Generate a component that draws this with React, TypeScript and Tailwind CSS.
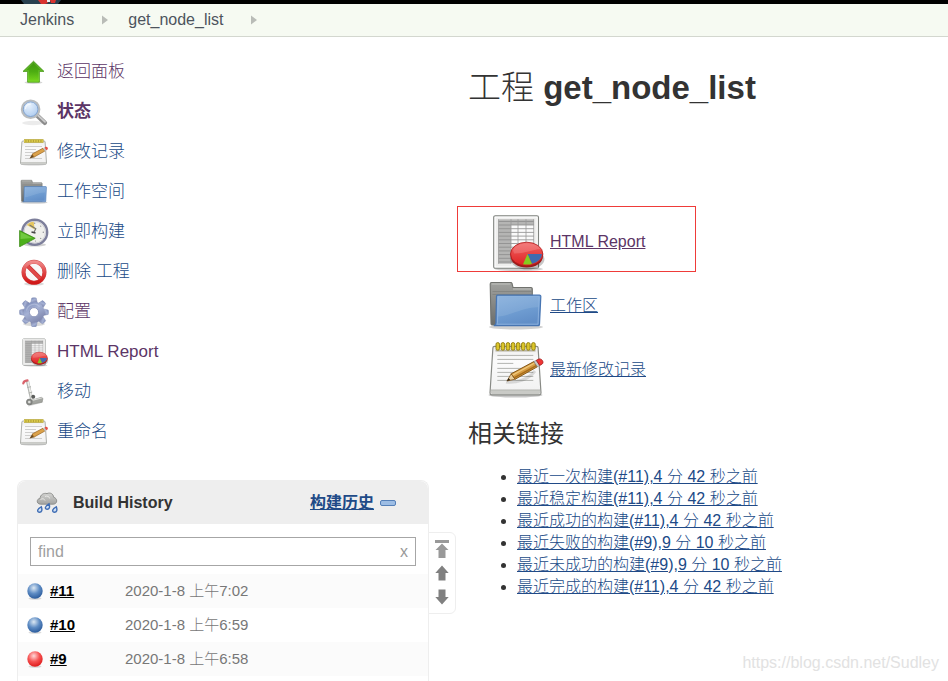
import type { ReactNode } from "react";

type IconProps = { className?: string };

const small = "h-[30px] w-[30px] shrink-0";
const large = "h-[60px] w-[60px] shrink-0";

function UpArrowIcon() {
  return (
    <svg viewBox="0 0 30 30" className={small} aria-hidden="true">
      <defs>
        <linearGradient id="up" x1="0" y1="0" x2="0" y2="1">
          <stop offset="0" stopColor="#3f9410" />
          <stop offset="0.5" stopColor="#4dad12" />
          <stop offset="1" stopColor="#79d91c" />
        </linearGradient>
      </defs>
      <ellipse cx="14.5" cy="25.5" rx="9" ry="1.5" fill="#000" opacity="0.16" />
      <path d="M14.5 4.2 25 14.4h-4.6v10.8H8.6V14.4H4Z" fill="url(#up)" stroke="#4b9a1c" strokeWidth="0.8" strokeLinejoin="round" />
      <path d="M14.5 5.8 22.6 13.6h-3V24H9.5V13.6H6.3Z" fill="none" stroke="#8fdc55" strokeWidth="0.6" opacity="0.5" />
    </svg>
  );
}

function SearchIcon() {
  return (
    <svg viewBox="0 0 30 30" className={small} aria-hidden="true">
      <defs>
        <radialGradient id="lens" cx="0.4" cy="0.3" r="0.8">
          <stop offset="0" stopColor="#e8f2fd" />
          <stop offset="1" stopColor="#a3c4ec" />
        </radialGradient>
      </defs>
      <ellipse cx="14" cy="26" rx="11" ry="2.2" fill="#000" opacity="0.08" />
      <path d="m18.5 18.8 7.4 7" stroke="#8c8c8c" strokeWidth="4.4" strokeLinecap="round" />
      <path d="m19.3 18.6 6.7 6.3" stroke="#cdcdcd" strokeWidth="1.8" strokeLinecap="round" />
      <circle cx="11.6" cy="12.2" r="8.7" fill="url(#lens)" stroke="#b9bcbe" strokeWidth="2.2" />
      <circle cx="11.6" cy="12.2" r="7.3" fill="none" stroke="#7d9ecb" strokeWidth="0.9" />
      <path d="M6.4 12.2c.2-3 2.4-5 5.4-5" fill="none" stroke="#fff" strokeWidth="1.3" opacity="0.7" />
    </svg>
  );
}

function PadDefs() {
  return (
    <defs>
      <linearGradient id="pad" x1="0" y1="0" x2="0" y2="1">
        <stop offset="0" stopColor="#ededed" />
        <stop offset="0.3" stopColor="#fbfbfb" />
        <stop offset="1" stopColor="#f1f1f1" />
      </linearGradient>
    </defs>
  );
}

function NotepadIcon({ className = large }: IconProps) {
  return (
    <svg viewBox="0 0 60 60" className={className} aria-hidden="true">
      <PadDefs />
      <ellipse cx="29.5" cy="55" rx="27" ry="2.6" fill="#000" opacity="0.22" />
      <path d="M8.5 6.3h42q1.5 0 1.6 1.5L55 53q0 1.8-1.8 1.8H5.8Q4 54.8 4 53L6.9 7.8q.1-1.5 1.6-1.5Z" fill="url(#pad)" stroke="#888a85" strokeWidth="1.2" />
      <path d="M5 50.3h49v2.5q0 1.2-1.2 1.2H6.2Q5 54 5 52.8Z" fill="#c9cac6" />
      <path d="M5 50h49" stroke="#a3a5a0" strokeWidth="0.8" />
      <path d="M11.3 15.4h36M11.3 19.4h36M11.3 23.4h16M11.3 28.4h36M11.3 32.4h36M11.3 36.4h36M11.3 40.4h36" stroke="#b2b3b0" strokeWidth="1" />
      <path d="M9.5 9.8h40v1.8h-40z" fill="#77724f" opacity="0.5" />
      {[10, 15.1, 20.2, 25.3, 30.4, 35.5, 40.6, 45.7].map((x) => (
        <rect key={x} x={x} y="2.6" width="3.5" height="7.6" rx="1.6" fill="#dcc62a" stroke="#8d7a0c" strokeWidth="0.9" />
      ))}
      <path d="M20 42c10 1 22-2 29-11" fill="none" stroke="#000" strokeWidth="3" opacity="0.12" />
      <path d="m21 41 4.200-7.200 4 5.400Z" fill="#e9cfa0" stroke="#7c4f16" strokeWidth="0.8" strokeLinejoin="round" />
      <path d="m21 41 1.600-3 1.600 2.100Z" fill="#2b2013" />
      <path d="M25.2 33.8 47.8 21.6l3.5 5.200-22.100 12.400Z" fill="#d59b42" stroke="#7b4d0e" strokeWidth="0.9" />
      <path d="M26.6 35.2 48.7 23" stroke="#f0c77a" strokeWidth="1.4" />
      <path d="m28.1 37.9 22.200-12.300" stroke="#a76c1b" strokeWidth="1.5" />
      <path d="m47.8 21.600 2.500-1.300 3.400 5.100-2.400 1.400Z" fill="#c9cbc7" stroke="#77787a" strokeWidth="0.6" />
      <path d="m50.3 20.3 2.500-1.300c3-.8 5.600 3.300 3.300 5.100l-2.400 1.300Z" fill="#ef3535" stroke="#a31515" strokeWidth="0.8" />
    </svg>
  );
}

function SmallNotepadIcon() {
  return (
    <svg viewBox="0 0 30 30" className={small} aria-hidden="true">
      <PadDefs />
      <ellipse cx="14.5" cy="27.3" rx="13" ry="1.300" fill="#000" opacity="0.18" />
      <path d="M4 4h21q1 0 1.100 1l1.400 21q0 1-1 1H2.500q-1 0-1-1L2.900 5Q3 4 4 4Z" fill="url(#pad)" stroke="#a5a7a3" strokeWidth="0.9" />
      <path d="M2 25h25v1.500H2Z" fill="#c9cac6" />
      <path d="M6 9.500h17M6 12.500h11M6 15.500h14M6 18.500h9M6 21.500h17" stroke="#c9cac8" strokeWidth="0.9" />
      <path d="M5 2.200h19.500v3.600H5Z" fill="#b5a436" />
      <path d="M5 4h19.500" stroke="#dccb4c" strokeWidth="2.600" strokeDasharray="1.400 1.100" />
      <path d="m10.500 21.500 2.700-4.600 2.200 3.300Z" fill="#6d4c22" />
      <path d="M13.200 17 24 11.200l1.800 2.900-11 6.100Z" fill="#dca24a" stroke="#96621c" strokeWidth="0.700" />
      <path d="m24 11.200 1.800-.9 1.800 2.900-1.800.9Z" fill="#c5c6c4" />
      <path d="m25.600 10.300 1.200-.6c1.600-.3 2.800 1.700 1.700 2.700l-1.300.8Z" fill="#e65048" />
    </svg>
  );
}

function FolderIcon({ className = small }: IconProps) {
  return (
    <svg viewBox="0 0 60 60" className={className} aria-hidden="true">
      <defs>
        <linearGradient id="folderBack" x1="0" y1="0" x2="0" y2="1">
          <stop offset="0" stopColor="#a1a29f" />
          <stop offset="1" stopColor="#6b6d6a" />
        </linearGradient>
        <linearGradient id="folderFront" x1="0" y1="0" x2="0.4" y2="1">
          <stop offset="0" stopColor="#86aedb" />
          <stop offset="0.55" stopColor="#719fd3" />
          <stop offset="1" stopColor="#628fc8" />
        </linearGradient>
      </defs>
      <ellipse cx="30" cy="51" rx="27" ry="2.5" fill="#000" opacity="0.18" />
      <path d="M5.500 6.500h19.300q1 0 1.200 1l1 4h18q1.300 0 1.300 1.300V49H6q-1 0-1-1.200L4.200 8q0-1.500 1.300-1.500Z" fill="url(#folderBack)" stroke="#70726e" strokeWidth="1.1" />
      <path d="M5.700 8h18.600M27 13h18" stroke="#c4c5c2" strokeWidth="0.9" />
      <path d="M6.500 15.500h39M6.500 18.500h39" stroke="#747673" strokeWidth="0.7" opacity="0.7" />
      <path d="M11.500 19.200h42q1.400 0 1.300 1.400l-1.300 27.800q-.1 1.300-1.400 1.300H7.700q2-.2 2.200-2.300l.6-27q.1-1.200 1-1.200Z" fill="url(#folderFront)" stroke="#4775b2" strokeWidth="1.2" />
      <path d="M12 20.700h41.200L52 48.200H10.900q.6-1 .6-2Z" fill="none" stroke="#97bae3" strokeWidth="0.9" opacity="0.8" />
      <path d="M12 21.200h40.800l-.5 10C36 31 25 40 11.700 40.500Z" fill="#fff" opacity="0.1" />
    </svg>
  );
}

function BuildNowIcon() {
  return (
    <svg viewBox="0 0 30 30" className={small} aria-hidden="true">
      <ellipse cx="16" cy="27.8" rx="11" ry="1.8" fill="#000" opacity="0.18" />
      <circle cx="15.7" cy="15.300" r="12.500" fill="#f0f0ec" stroke="#7d7f9b" strokeWidth="2.4" />
      <circle cx="15.7" cy="15.3" r="10.8" fill="none" stroke="#c6c7cf" strokeWidth="0.8" />
      <path d="m15.700 12.500-8-4.500c1.800-2 4-3 7-3.200Z" fill="#e6c65e" />
      <path d="m10.500 8 6.300 3.800-2 3.700" fill="none" stroke="#77776f" strokeWidth="1.2" />
      <path d="m16.500 16-4-1" stroke="#444" strokeWidth="1.300" />
      <g fill="#8d8e94">
        <circle cx="15.7" cy="6.300" r="0.7" />
        <circle cx="24.300" cy="15.300" r="0.7" />
        <circle cx="21.700" cy="9.200" r="0.6" />
        <circle cx="21.700" cy="21.400" r="0.6" />
        <circle cx="16.500" cy="24" r="0.6" />
      </g>
      <path d="M.6 13.500 16.200 21.300.6 29.800Z" fill="#4cb01b" stroke="#3b8b14" strokeWidth="0.8" strokeLinejoin="round" />
      <path d="M1.500 15 13.500 21 1.500 22Z" fill="#8ede5d" opacity="0.55" />
    </svg>
  );
}

function DeleteIcon() {
  return (
    <svg viewBox="0 0 30 30" className={small} aria-hidden="true">
      <defs>
        <linearGradient id="ban" x1="0" y1="0" x2="0" y2="1">
          <stop offset="0" stopColor="#f08a8a" />
          <stop offset="0.55" stopColor="#de4040" />
          <stop offset="1" stopColor="#d01818" />
        </linearGradient>
      </defs>
      <ellipse cx="15" cy="27" rx="10" ry="1.6" fill="#000" opacity="0.15" />
      <circle cx="15" cy="15.3" r="10.500" fill="#f8f8f8" stroke="#cf4a4a" strokeWidth="4" />
      <path d="m7.700 8 14.600 14.600" stroke="#c93030" strokeWidth="4.200" />
      <path d="m7.700 8 14.600 14.600" stroke="#e04a4a" strokeWidth="3" />
      <circle cx="15" cy="15.3" r="10.500" fill="none" stroke="url(#ban)" strokeWidth="3.300" />
    </svg>
  );
}

function GearIcon() {
  return (
    <svg viewBox="0 0 30 30" className={small} aria-hidden="true">
      <defs>
        <linearGradient id="gear" x1="0" y1="0" x2="0.6" y2="1">
          <stop offset="0" stopColor="#7384b4" />
          <stop offset="0.5" stopColor="#a5b1d4" />
          <stop offset="1" stopColor="#8088ae" />
        </linearGradient>
      </defs>
      <ellipse cx="15" cy="27" rx="11" ry="2" fill="#000" opacity="0.15" />
      <g fill="url(#gear)" stroke="#7f8ab2" strokeWidth="0.5">
        {[0, 45, 90, 135, 180, 225, 270, 315].map((a) => (
          <path key={a} d="m11.700 6 1.100-5q2.200-.6 4.400 0l1.100 5Z" transform={`rotate(${a} 15 15.200)`} />
        ))}
      </g>
      <circle cx="15" cy="15.2" r="10.4" fill="url(#gear)" />
      <circle cx="15" cy="15.2" r="4.6" fill="#fff" stroke="#8791b8" strokeWidth="0.9" />
      <path d="M7.500 13.500a7.700 7.700 0 0 1 13-4" fill="none" stroke="#c6cfe8" strokeWidth="1.2" opacity="0.5" />
    </svg>
  );
}

function ReportIcon({ className = small }: IconProps) {
  return (
    <svg viewBox="0 0 60 60" className={className} aria-hidden="true">
      <defs>
        <linearGradient id="pie" x1="0" y1="0" x2="0" y2="1">
          <stop offset="0" stopColor="#f26464" />
          <stop offset="1" stopColor="#dd2222" />
        </linearGradient>
      </defs>
      <ellipse cx="33" cy="57" rx="24" ry="2.2" fill="#000" opacity="0.18" />
      <rect x="7.8" y="3.8" width="44.6" height="52.4" rx="1.5" fill="#efefee" stroke="#7f827e" strokeWidth="1.3" />
      <rect x="9" y="5" width="42.2" height="50" fill="none" stroke="#fff" strokeWidth="1" />
      <rect x="12.5" y="7.2" width="35.5" height="44.6" fill="#fafafa" />
      <path d="M12.500 7.200H48v5.800H25v38.800H12.500Z" fill="#b5b5b4" />
      <path d="M12.500 9.500H48M12.500 13H48M12.500 16.700H48M12.500 20.400H48M12.500 24.100H48M12.500 27.800H48M12.500 31.500H48M12.500 35.200H48M12.500 38.900H48M12.500 42.600H48M12.500 46.300H48M12.500 50H48" stroke="#8c8c8b" strokeWidth="0.8" />
      <path d="M12.500 7.200v44.600M25 7.200v44.600M32 7.200v44.600M40 7.200v44.600M47.700 7.200v44.600" stroke="#999" strokeWidth="0.8" />
      <ellipse cx="41.5" cy="47" rx="17" ry="10.5" fill="#000" opacity="0.22" />
      <path d="M24.500 41.500v2.500c0 6.800 7.300 11.500 16.200 11.500s16.200-4.700 16.200-11.500v-2.500Z" fill="#9c1a1a" />
      <ellipse cx="40.7" cy="42" rx="16.2" ry="11.8" fill="url(#pie)" stroke="#b01c1c" strokeWidth="0.8" />
      <path d="M41.500 42h14.300c0 4.500-3.600 8-9.800 9.800Z" fill="#3f6bb0" />
      <path d="m41.500 42 4.500 9.900c-2.500.9-6 .9-9 .3Z" fill="#84cd1f" />
      <path d="M27 38c2-4.500 7-6.800 13.700-6.800S52.500 33.300 54.500 37c-8 .5-18 5-26.500 4.500Z" fill="#fff" opacity="0.16" />
    </svg>
  );
}

function MoveIcon() {
  return (
    <svg viewBox="0 0 30 30" className={small} aria-hidden="true">
      <path d="M9 28.500 24 24.500" stroke="#000" strokeWidth="2" opacity="0.13" />
      <path d="m8.500 4 4.200 18.500" stroke="#b3b5b1" strokeWidth="3.2" />
      <path d="m9 4.500 4 18" stroke="#efefec" strokeWidth="1.6" />
      <path d="m8.300 10.500 3.700-.8M9.700 16l3.500-.8" stroke="#a5a7a2" strokeWidth="0.8" />
      <path d="M4.300 6.500q.2-2.700 4.200-3.200" fill="none" stroke="#d9626b" strokeWidth="2.200" strokeLinecap="round" />
      <path d="m8.500 24.500 13.800-4.200 1.700 1.200-1 3.700L11 27.700Z" fill="#a3a5a0" stroke="#8b8d88" strokeWidth="0.6" />
      <path d="m13 22.700 9.500-2.200 1 .7-9.500 2.500Z" fill="#dcddd9" />
      <circle cx="14.200" cy="19.800" r="2" fill="#5c5e5c" />
      <circle cx="10.300" cy="25" r="2.900" fill="#8b8d89" stroke="#6f716e" strokeWidth="0.6" />
      <circle cx="10.300" cy="25" r="1.300" fill="#dfe0dd" />
    </svg>
  );
}

function RainIcon() {
  return (
    <svg viewBox="0 0 22 22" className="h-[22px] w-[22px]" aria-hidden="true">
      <defs>
        <linearGradient id="cloud" x1="0" y1="0" x2="0" y2="1">
          <stop offset="0" stopColor="#d2d2d0" />
          <stop offset="1" stopColor="#a3a4a2" />
        </linearGradient>
      </defs>
      <path d="M4.500 12.200C.2 12 .2 6.800 4 6.500 4.200 2.800 7.700.6 11 1.600c3-1.500 6.500.2 6.500 3.600 4.400 1 4.200 6.800-.2 7Z" fill="url(#cloud)" stroke="#8b8c8a" strokeWidth="0.9" />
      <path d="M4.500 7.500c2-1.500 4-.5 4.500 1M9 4.500c2-1 4.500 0 4.700 2" fill="none" stroke="#ececea" strokeWidth="0.9" />
      <g fill="#cfe0f5" stroke="#3f6db4" strokeWidth="1.4">
        <path d="M5.300 14.800c1.200 3.200.5 5.400-1.800 5.400S.3 17.500 5.300 14.800Z" />
        <path d="M13 11.800c1.200 3.200.5 5.400-1.800 5.400S8 14.500 13 11.800Z" />
        <path d="M20.300 14.800c1.200 3.200.5 5.400-1.800 5.400s-3.200-2.700 1.800-5.400Z" />
      </g>
    </svg>
  );
}

function Ball({ color }: { color: "blue" | "red" }) {
  const [light, mid, dark] = color === "blue" ? ["#dce8f3", "#5e8cc4", "#2f5f9f"] : ["#ffd9d9", "#f65252", "#e02020"];
  return (
    <svg viewBox="0 0 18 18" className="h-[18px] w-[18px] shrink-0" role="img" aria-label={color === "blue" ? "成功" : "失败"}>
      <defs>
        <radialGradient id={`ball-${color}`} cx="0.42" cy="0.3" r="0.68">
          <stop offset="0" stopColor={light} />
          <stop offset="0.55" stopColor={mid} />
          <stop offset="1" stopColor={dark} />
        </radialGradient>
      </defs>
      <ellipse cx="9" cy="16.5" rx="6.5" ry="1.3" fill="#000" opacity="0.14" />
      <circle cx="9" cy="9" r="7.7" fill={`url(#ball-${color})`} />
    </svg>
  );
}

function PageArrow({ kind }: { kind: "top" | "up" | "down" }) {
  return (
    <svg viewBox="0 0 16 18" className="h-[18px] w-4" aria-hidden="true">
      {kind === "top" && <path d="M1 0h14v3H1zM8 3.500 14.500 10H11.500v8H4.500v-8H1.500Z" fill="#999" />}
      {kind === "up" && <path d="M8 1.500 14.700 9H11.500v7.500H4.500V9H1.300Z" fill="#808080" />}
      {kind === "down" && <path d="M8 16.500 14.700 9H11.500V1.500H4.500V9H1.300Z" fill="#808080" />}
    </svg>
  );
}

function Separator() {
  return (
    <svg viewBox="0 0 6 10" className="h-[10px] w-[6px]" aria-hidden="true">
      <path d="M0 0.500 6 5 0 9.500Z" fill="#b9bcb7" />
    </svg>
  );
}

const VISITED = "text-[#5c3566]";
const LINK = "text-[#204a87]";

const tasks: { label: string; icon: ReactNode; tone: string }[] = [
  { label: "返回面板", icon: <UpArrowIcon />, tone: VISITED },
  { label: "状态", icon: <SearchIcon />, tone: `${VISITED} font-bold` },
  { label: "修改记录", icon: <SmallNotepadIcon />, tone: LINK },
  { label: "工作空间", icon: <FolderIcon />, tone: LINK },
  { label: "立即构建", icon: <BuildNowIcon />, tone: LINK },
  { label: "删除 工程", icon: <DeleteIcon />, tone: LINK },
  { label: "配置", icon: <GearIcon />, tone: VISITED },
  { label: "HTML Report", icon: <ReportIcon />, tone: VISITED },
  { label: "移动", icon: <MoveIcon />, tone: LINK },
  { label: "重命名", icon: <SmallNotepadIcon />, tone: LINK },
];

const builds: { id: string; time: string; color: "blue" | "red" }[] = [
  { id: "#11", time: "2020-1-8 上午7:02", color: "blue" },
  { id: "#10", time: "2020-1-8 上午6:59", color: "blue" },
  { id: "#9", time: "2020-1-8 上午6:58", color: "red" },
];

const permalinks = [
  "最近一次构建(#11),4 分 42 秒之前",
  "最近稳定构建(#11),4 分 42 秒之前",
  "最近成功的构建(#11),4 分 42 秒之前",
  "最近失败的构建(#9),9 分 10 秒之前",
  "最近未成功的构建(#9),9 分 10 秒之前",
  "最近完成的构建(#11),4 分 42 秒之前",
];

function BuildHistory() {
  return (
    <section className="relative flex grow flex-col rounded-t-lg border border-b-0 border-[#eee]">
      <header className="flex h-[43px] shrink-0 items-center rounded-t-lg bg-[#eee] pr-8 pl-[18px]">
        <RainIcon />
        <h2 className="ml-[15px] grow font-bold">Build History</h2>
        <a href="#trend" className={`font-bold underline ${LINK}`}>构建历史</a>
        <button type="button" aria-label="收起" className="ml-[6px] h-[6px] w-4 rounded-xs border border-[#5580b8] bg-[#9dbde4]" />
      </header>
      <div className="px-3 pt-[13px] pb-2">
        <div className="flex h-[29px] items-center border border-[#a6a6a6] px-[7px]">
          <input aria-label="find" placeholder="find" className="min-w-0 grow outline-none placeholder:text-[#a0a0a0]" />
          <button type="button" aria-label="清除" className="text-[#999]">x</button>
        </div>
      </div>
      <table className="w-full text-[15px]">
        <tbody>
          {builds.map((b) => (
            <tr key={b.id} className="h-[34px] odd:bg-[#fbfbfb]">
              <td className="w-[107px] p-0 pl-2">
                <div className="flex items-center gap-[6px]">
                  <Ball color={b.color} />
                  <a href={b.id} className="font-bold text-black underline">{b.id}</a>
                </div>
              </td>
              <td className="p-0 text-[#777]">{b.time}</td>
            </tr>
          ))}
        </tbody>
      </table>
      <nav aria-label="构建翻页" className="absolute top-[51px] left-full flex h-[82px] w-7 flex-col items-center gap-[6px] rounded-r-md border border-[#eee] bg-white pt-[7px]">
        <button type="button" aria-label="最新"><PageArrow kind="top" /></button>
        <button type="button" aria-label="较新"><PageArrow kind="up" /></button>
        <button type="button" aria-label="较旧"><PageArrow kind="down" /></button>
      </nav>
    </section>
  );
}

export default function App() {
  return (
    <div className="relative flex min-h-screen flex-col bg-white font-['Liberation_Sans','Noto_Sans_CJK_SC',sans-serif] text-base leading-[22px] font-light text-[#333] [&_button]:block">
      <header className="h-1 bg-black pl-5">
        <svg viewBox="0 0 42 4" className="h-1 w-[42px]" aria-hidden="true">
          <path d="M1 0h40l-3 4H4Z" fill="#28404f" />
          <path d="M18 0h9l1 3-3 1h-4ZM30 0h6l-1 3h-4Z" fill="#d8332f" />
          <path d="M27 0h3v2h-3Z" fill="#eee" />
        </svg>
      </header>
      <nav aria-label="breadcrumb" className="flex h-[33px] items-center border-b border-[#d3d7cf] bg-[#f6faf2] pl-5 text-[#4d545d]">
        <a href="#jenkins">Jenkins</a>
        <span className="mr-5 ml-7"><Separator /></span>
        <a href="#project">get_node_list</a>
        <span className="ml-7"><Separator /></span>
      </nav>
      <div className="flex grow">
        <aside className="flex w-[429px] shrink-0 flex-col pt-[15px] pl-[17px]">
          <ul className="mb-7 text-[17px]">
            {tasks.map((t) => (
              <li key={t.label} className="flex h-10 items-center pl-[2px]">
                <a href="#task" className={`flex items-center gap-2 ${t.tone}`}>
                  {t.icon}
                  <span>{t.label}</span>
                </a>
              </li>
            ))}
          </ul>
          <BuildHistory />
        </aside>
        <main className="ml-7 min-w-0 grow pt-[31px]">
          <h1 className="pl-[11px] text-[33px] leading-10">
            工程 <span className="font-bold">get_node_list</span>
          </h1>
          <div className="mt-[98px] flex h-[66px] w-[239px] items-center border border-[#ef3b39] pt-[6px] pl-7">
            <a href="#report" className={`flex items-center gap-1 underline ${VISITED}`}>
              <ReportIcon className={large} />
              HTML Report
            </a>
          </div>
          <div className="mt-[2px] flex h-16 items-center pl-[29px]">
            <a href="#ws" className={`flex items-center gap-1 underline ${LINK}`}>
              <FolderIcon className={large} />
              工作区
            </a>
          </div>
          <div className="flex h-16 items-center pl-[29px]">
            <a href="#changes" className={`flex items-center gap-1 underline ${LINK}`}>
              <NotepadIcon />
              最新修改记录
            </a>
          </div>
          <h2 className="mt-4 pl-[11px] text-2xl leading-8 font-normal">相关链接</h2>
          <ul className="mt-4 list-disc pl-[60px]">
            {permalinks.map((p) => (
              <li key={p}>
                <a href="#build" className={`underline ${LINK}`}>{p}</a>
              </li>
            ))}
          </ul>
        </main>
      </div>
      <p className="absolute right-[9px] bottom-[7px] text-[#e2e2e2]">https://blog.csdn.net/Sudley</p>
    </div>
  );
}
